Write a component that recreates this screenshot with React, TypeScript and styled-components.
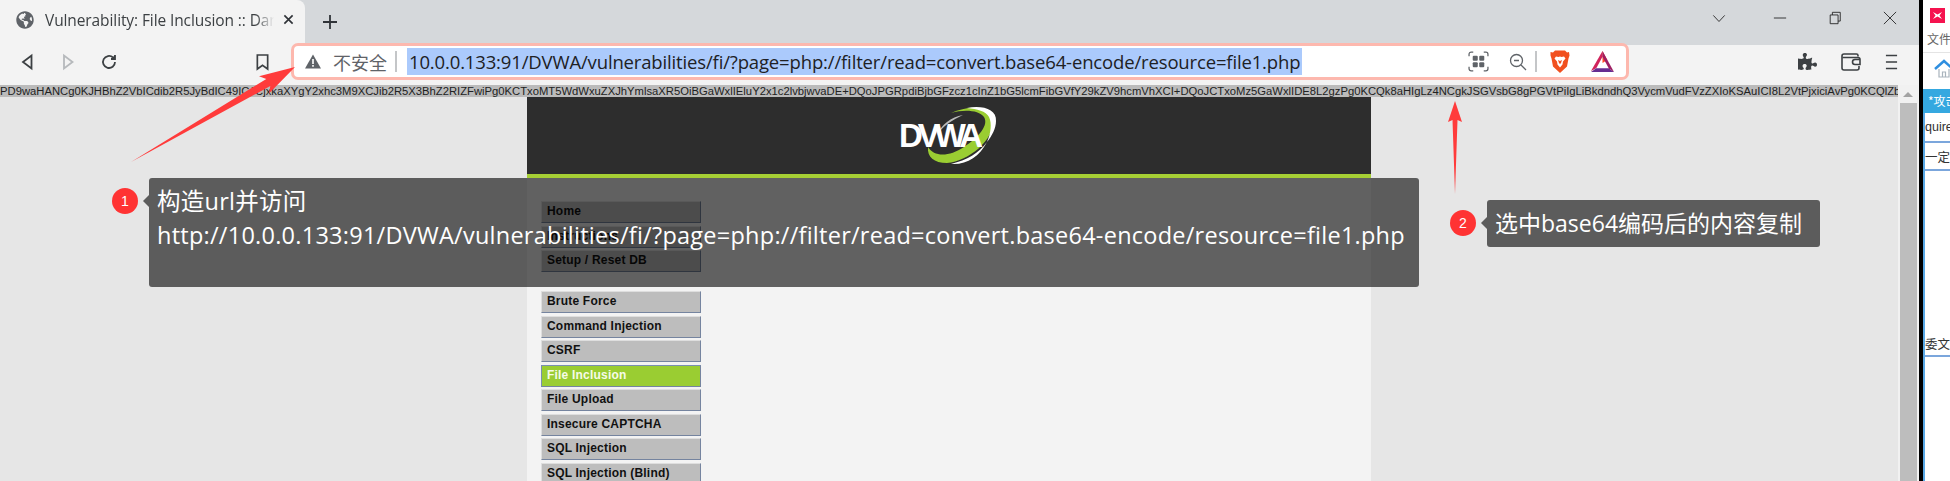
import React from 'react';

import { FaGlobeAmericas, FaPuzzlePiece } from 'react-icons/fa';
import styled, { createGlobalStyle } from 'styled-components';

const ENCODED =
  'PD9waHANCg0KJHBhZ2VbICdib2R5JyBdIC49ICJCjxkaXYgY2xhc3M9XCJib2R5X3BhZ2RIZFwiPg0KCTxoMT5WdWxuZXJhYmlsaXR5OiBGaWxlIEluY2x1c2lvbjwvaDE+DQoJPGRpdiBjbGFzcz1cInZ1bG5lcmFibGVfY29kZV9hcmVhXCI+DQoJCTxoMz5GaWxlIDE8L2gzPg0KCQk8aHIgLz4NCgkJSGVsbG8gPGVtPiIgLiBkdndhQ3VycmVudFVzZXIoKSAuICI8L2VtPjxiciAvPg0KCQlZb3UgYXJl';
const URL_TEXT = '10.0.0.133:91/DVWA/vulnerabilities/fi/?page=php://filter/read=convert.base64-encode/resource=file1.php';

const topMenu = ['Home', 'Instructions', 'Setup / Reset DB'];
const attackMenu = [
  'Brute Force',
  'Command Injection',
  'CSRF',
  'File Inclusion',
  'File Upload',
  'Insecure CAPTCHA',
  'SQL Injection',
  'SQL Injection (Blind)',
];

function App() {
  return (
    <>
      <GlobalStyle />
      <Screen>
        <Browser>
          <TabStrip>
            <Tab>
              <FaGlobeAmericas size={18} color="#5f6368" />
              <TabTitle>Vulnerability: File Inclusion :: Damn Vulnerable Web App</TabTitle>
              <TabClose viewBox="0 0 12 12">
                <path d="M1.5 1.5l9 9M10.5 1.5l-9 9" />
              </TabClose>
            </Tab>
            <NewTab viewBox="0 0 16 16">
              <path d="M8 1v14M1 8h14" />
            </NewTab>
            <WindowControls>
              <WindowIcon viewBox="0 0 16 16">
                <path d="M1.5 5l6.500 7 6.500-7" />
              </WindowIcon>
              <WindowIcon viewBox="0 0 16 16">
                <path d="M1 8h14" />
              </WindowIcon>
              <WindowIcon viewBox="0 0 16 16">
                <path d="M2.5 4.5h9v10h-9zM5 4.5V1.500h9v10h-2.500" />
              </WindowIcon>
              <WindowIcon viewBox="0 0 16 16">
                <path d="M1 1l14 14M15 1L1 15" />
              </WindowIcon>
            </WindowControls>
          </TabStrip>

          <Toolbar>
            <NavButtons>
              <NavIcon viewBox="0 0 18 18">
                <path d="M13.5 2.5v13L5 9z" />
              </NavIcon>
              <NavIcon viewBox="0 0 18 18" $muted>
                <path d="M5 2.500v13L13.500 9z" />
              </NavIcon>
              <NavIcon viewBox="0 0 18 18">
                <path d="M15 9a6 6 0 1 1-2-4.500" />
                <path d="M15 2v4h-4" fill="#3c4043" />
              </NavIcon>
              <BookmarkIcon viewBox="0 0 16 18">
                <path d="M2.5 1.500h11v15L8 12.500l-5.500 4z" />
              </BookmarkIcon>
            </NavButtons>

            <AddressBar>
              <WarningIcon viewBox="0 0 16 15">
                <path d="M8 0.500L16 14.500H0z" fill="#5f6368" />
                <path d="M7.200 5h1.600v5H7.200zM7.200 11h1.600v1.700H7.200z" fill="#fff" />
              </WarningIcon>
              <NotSecure>不安全</NotSecure>
              <AddressDivider />
              <SelectedUrl>{URL_TEXT}</SelectedUrl>
              <AddressTools>
                <QrIcon viewBox="0 0 20 20">
                  <path d="M1 5V3a2 2 0 0 1 2-2h2M15 1h2a2 2 0 0 1 2 2v2M19 15v2a2 2 0 0 1-2 2h-2M5 19H3a2 2 0 0 1-2-2v-2" fill="none" stroke="#5f6368" strokeWidth="1.200" />
                  <rect x="4.500" y="4.500" width="4.800" height="4.800" rx="1" />
                  <rect x="10.700" y="4.500" width="4.800" height="4.800" rx="1" />
                  <rect x="4.500" y="10.700" width="4.800" height="4.800" rx="1" />
                  <rect x="10.700" y="10.700" width="4.800" height="4.800" rx="1" />
                </QrIcon>
                <ZoomIcon viewBox="0 0 18 18">
                  <circle cx="7.500" cy="7.500" r="6" />
                  <path d="M5 7.500h5M12 12l5 5" />
                </ZoomIcon>
                <AddressDivider />
                <BraveIcon viewBox="0 0 20 24">
                  <path d="M5 1h10l2 2 2-.5.500 3.500-1 3-1.500 8-6.500 6-.5.500-.5-.5-6.500-6-1.500-8-1-3L.500 2.500 3 3z" fill="#f1501f" />
                  <path d="M6 7l2.500.5L10 7l1.500.5L14 7l1.500 2-2.500 3-.5 3-2.500 3-2.500-3-.5-3-2.500-3z" fill="#fff" />
                  <path d="M8 10.500l2 1 2-1-1 3-1 1-1-1z" fill="#f1501f" />
                </BraveIcon>
                <BatIcon viewBox="0 0 24 22">
                  <path d="M12 0l5 9.500-5 3z" fill="#ff4724" />
                  <path d="M12 0L0 21l5.500-3L12 6z" fill="#d1245c" />
                  <path d="M0 22h24l-5.500-4h-13z" fill="#662d91" />
                  <path d="M12 0l12 22-5.500-4L12 6z" fill="#9e1f63" />
                </BatIcon>
              </AddressTools>
            </AddressBar>

            <ExtensionTools>
              <FaPuzzlePiece size={19} color="#3c4043" />
              <WalletIcon viewBox="0 0 20 18">
                <path d="M17 3.500V2.500a1.500 1.500 0 0 0-1.500-1.500H3A2 2 0 0 0 1 3v12a2 2 0 0 0 2 2h13a2 2 0 0 0 2-2v-2" />
                <path d="M1.500 4.500H17a2 2 0 0 1 2 2v5h-5a2.500 2.500 0 0 1 0-5h5" />
              </WalletIcon>
              <MenuIcon viewBox="0 0 14 18">
                <path d="M1 2h12M1 9h12M1 16h12" />
              </MenuIcon>
            </ExtensionTools>
          </Toolbar>

          <Viewport>
            <PageArea>
              <EncodedLine>{ENCODED}</EncodedLine>
              <PageRow>
                <PageColumn>
                  <PageHeader>
                    <DvwaLogo viewBox="0 2 140 77">
                      <path d="M72 18C90 10 112 10 114 26 115 45 90 66 68 68 55 68 48 62 49 52 55 62 70 62 85 52 100 42 110 30 105 22 100 15 85 14 72 18z" fill="#9acd32" />
                      <path d="M88 13C103 10 118 14 117 26 117 33 113 41 108 47 112 38 113 28 110 22 107 16 98 14 88 13z" fill="#fff" />
                      <path d="M72 69C88 70 100 62 108 47 100 58 88 65 72 69z" fill="#fff" />
                      <path d="M84 20C72 22 62 30 58 40 64 31 73 25 84 20z" fill="#bbb" />
                      <LogoText x="20" y="52">DVWA</LogoText>
                    </DvwaLogo>
                  </PageHeader>
                  <MenuBlock>
                    <MenuGroup>
                      {topMenu.map((item) => (
                        <MenuItem key={item}>{item}</MenuItem>
                      ))}
                    </MenuGroup>
                    <MenuGroup>
                      {attackMenu.map((item) => (
                        <MenuItem key={item} $active={item === 'File Inclusion'}>
                          {item}
                        </MenuItem>
                      ))}
                    </MenuGroup>
                  </MenuBlock>
                </PageColumn>
              </PageRow>
            </PageArea>
            <Scrollbar>
              <ScrollArrow />
              <ScrollThumb />
            </Scrollbar>
          </Viewport>
        </Browser>

        <WindowGap />

        <SideWindow>
          <SideLogo viewBox="0 0 15 15">
            <rect width="15" height="15" fill="#f5134f" />
            <path d="M3 4l4.500 2.500L12 4 9.500 7.500 12 11 7.500 8.500 3 11l2.500-3.500z" fill="#fff" />
          </SideLogo>
          <SideMenuText>文件</SideMenuText>
          <SideHome viewBox="0 0 20 19">
            <path d="M1 10l9-8 9 8" fill="none" stroke="#2f8fe0" strokeWidth="2.500" />
            <path d="M5 10v8h10v-8M8.500 18v-5h3v5" fill="none" stroke="#a9b4bd" strokeWidth="1.200" />
          </SideHome>
          <SideTabBar>*攻击</SideTabBar>
          <SideEditor>
            <SideLine $height={28}>quire</SideLine>
            <SideLine $height={26}>一定要</SideLine>
            <SideLine $height={182} $alignEnd>
              委文件
            </SideLine>
          </SideEditor>
        </SideWindow>

        <Callout1Arrow viewBox="0 0 166 104">
          <polygon points="0,102 135.300,19 128,16.300 164,7 138,33.600 139.300,26" fill="#ff3b3b" />
        </Callout1Arrow>
        <Callout2Arrow viewBox="0 0 14 94">
          <polygon points="7,93 4.500,19 0,21 7,0 14,21 9.500,19" fill="#ff3b3b" />
        </Callout2Arrow>

        <NumberBadge $left={112} $top={188}>
          1
        </NumberBadge>
        <Note $left={149} $top={178} $width={1270} $height={109} $size={23.5} $spacing={0.25}>
          构造url并访问
          <br />
          http://{URL_TEXT}
        </Note>

        <NumberBadge $left={1450} $top={210}>
          2
        </NumberBadge>
        <Note $left={1487} $top={200} $width={333} $height={47} $size={23} $spacing={0}>
          选中base64编码后的内容复制
        </Note>
      </Screen>
    </>
  );
}

const GlobalStyle = createGlobalStyle`
  html, body {
    margin: 0;
    padding: 0;
    background: #fff;
    overflow: hidden;
  }
`;

const Screen = styled.div`
  position: relative;
  display: flex;
  width: 1950px;
  height: 481px;
  overflow: hidden;
  font-family: "Open Sans", "Noto Sans CJK SC", sans-serif;
`;

const Browser = styled.div`
  display: flex;
  flex-direction: column;
  width: 1919px;
  flex: none;
`;

const TabStrip = styled.div`
  display: flex;
  align-items: flex-end;
  height: 45px;
  background: #d5d8db;
  flex: none;
`;

const Tab = styled.div`
  display: flex;
  align-items: center;
  width: 305px;
  height: 45px;
  padding: 0 11px 6px 16px;
  box-sizing: border-box;
  background: #f3f3f3;
  border-radius: 0 8px 0 0;
`;

const TabTitle = styled.span`
  flex: 1;
  margin-left: 11px;
  font-family: "Open Sans", sans-serif;
  font-size: 15.5px;
  letter-spacing: -0.1px;
  color: #3c4043;
  white-space: nowrap;
  overflow: hidden;
  -webkit-mask-image: linear-gradient(90deg, #000 92%, transparent);
  mask-image: linear-gradient(90deg, #000 92%, transparent);
`;

const TabClose = styled.svg`
  width: 11px;
  height: 11px;
  margin-left: 9px;
  fill: none;
  stroke: #303338;
  stroke-width: 1.8;
`;

const NewTab = styled.svg`
  width: 16px;
  height: 16px;
  margin: 0 0 15px 17px;
  fill: none;
  stroke: #303338;
  stroke-width: 1.8;
`;

const WindowControls = styled.div`
  display: flex;
  align-items: center;
  gap: 41px;
  margin: 0 22px 20px auto;

  & > :first-child {
    margin-right: 6px;
  }
`;

const WindowIcon = styled.svg`
  width: 14px;
  height: 14px;
  fill: none;
  stroke: #222;
  stroke-width: 1;
`;

const Toolbar = styled.div`
  display: flex;
  align-items: center;
  height: 40px;
  padding-bottom: 7px;
  box-sizing: border-box;
  background: #f3f3f3;
  flex: none;
`;

const NavButtons = styled.div`
  display: flex;
  align-items: center;
  width: 291px;
  padding-left: 18px;
  box-sizing: border-box;
  flex: none;
`;

const NavIcon = styled.svg<{ $muted?: boolean }>`
  width: 18px;
  height: 18px;
  margin-right: 23px;
  fill: none;
  stroke: ${(props) => (props.$muted ? '#b6b9bc' : '#3c4043')};
  stroke-width: 1.8;
`;

const BookmarkIcon = styled.svg`
  width: 15px;
  height: 18px;
  margin-left: 114px;
  fill: none;
  stroke: #3c4043;
  stroke-width: 1.8;
`;

const AddressBar = styled.div`
  display: flex;
  align-items: center;
  width: 1338px;
  height: 37px;
  padding: 0 12px 0 11px;
  box-sizing: border-box;
  background: #fff;
  border: 3px solid #fdb8ae;
  border-radius: 7px;
  flex: none;
`;

const WarningIcon = styled.svg`
  width: 16px;
  height: 15px;
  flex: none;
`;

const NotSecure = styled.span`
  margin-left: 12px;
  font-size: 18px;
  color: #5f6368;
  font-family: "Noto Sans CJK SC", sans-serif;
`;

const AddressDivider = styled.span`
  width: 2px;
  height: 21px;
  margin-left: 8px;
  background: #c4c6c8;
  flex: none;
`;

const SelectedUrl = styled.span`
  margin-left: 10px;
  padding: 0 2px;
  line-height: 27px;
  background: #abcafc;
  font-size: 18.5px;
  letter-spacing: -0.15px;
  color: #202124;
  white-space: nowrap;
`;

const AddressTools = styled.div`
  display: flex;
  align-items: center;
  margin-left: auto;
`;

const QrIcon = styled.svg`
  width: 21px;
  height: 21px;
  fill: #5f6368;
`;

const ZoomIcon = styled.svg`
  width: 18px;
  height: 18px;
  margin-left: 20px;
  fill: none;
  stroke: #5f6368;
  stroke-width: 1.3;
`;

const BraveIcon = styled.svg`
  width: 20px;
  height: 25px;
  margin-left: 13px;
`;

const BatIcon = styled.svg`
  width: 23px;
  height: 23px;
  margin-left: 21px;
`;

const ExtensionTools = styled.div`
  display: flex;
  align-items: center;
  gap: 24px;
  margin-left: 169px;
`;

const WalletIcon = styled.svg`
  width: 20px;
  height: 18px;
  fill: none;
  stroke: #3c4043;
  stroke-width: 1.6;
`;

const MenuIcon = styled.svg`
  width: 13px;
  height: 18px;
  fill: none;
  stroke: #3c4043;
  stroke-width: 1.8;
`;

const Viewport = styled.div`
  display: flex;
  flex: 1;
  min-height: 0;
  border-right: 1px solid #f3f3f3;
`;

const PageArea = styled.div`
  display: flex;
  flex-direction: column;
  width: 1898px;
  min-width: 0;
  background: #e6e6e6;
`;

const EncodedLine = styled.div`
  height: 12px;
  line-height: 12px;
  background: #bbbbbb;
  color: #222;
  font-family: "Liberation Sans", Arial, sans-serif;
  font-size: 11.25px;
  white-space: nowrap;
  overflow: hidden;
  flex: none;
`;

const PageRow = styled.div`
  display: flex;
  justify-content: center;
  flex: 1;
  min-height: 0;
`;

const PageColumn = styled.div`
  width: 844px;
  background: #f3f3f3;
`;

const PageHeader = styled.div`
  display: flex;
  align-items: center;
  justify-content: center;
  height: 77px;
  background: #2d2d2d;
  border-bottom: 4px solid #a6cf35;
`;

const DvwaLogo = styled.svg`
  width: 140px;
  height: 77px;
`;

const LogoText = styled.text`
  font-family: "Liberation Sans", Arial, sans-serif;
  font-size: 33px;
  font-weight: 700;
  letter-spacing: -5px;
  fill: #fff;
`;

const MenuBlock = styled.div`
  display: flex;
  flex-direction: column;
  gap: 19px;
  padding: 23px 0 0 14px;
`;

const MenuGroup = styled.div`
  display: flex;
  flex-direction: column;
  gap: 2.5px;
`;

const MenuItem = styled.div<{ $active?: boolean }>`
  width: 160px;
  height: 22px;
  padding-left: 5px;
  box-sizing: border-box;
  background: ${(props) => (props.$active ? '#9acd32' : '#bdbdbd')};
  border: 1px solid ${(props) => (props.$active ? '#7a8fb0' : '#dedede')};
  border-right-color: #75849f;
  border-bottom-color: #75849f;
  color: ${(props) => (props.$active ? '#f6fbe8' : '#111')};
  font-family: "Liberation Sans", Arial, sans-serif;
  font-size: 12px;
  font-weight: 700;
  letter-spacing: 0.2px;
  line-height: 19px;
`;

const Scrollbar = styled.div`
  display: flex;
  flex-direction: column;
  align-items: center;
  flex: 1;
  padding-top: 7px;
  background: #f1f1f1;
`;

const ScrollArrow = styled.div`
  width: 0;
  height: 0;
  border-left: 5px solid transparent;
  border-right: 5px solid transparent;
  border-bottom: 5px solid #a3a3a3;
`;

const ScrollThumb = styled.div`
  flex: 1;
  width: 17px;
  margin-top: 6px;
  background: #bdbdbd;
`;

const WindowGap = styled.div`
  width: 4px;
  background: #000;
  flex: none;
`;

const SideWindow = styled.div`
  display: flex;
  flex-direction: column;
  flex: 1;
  min-width: 0;
  background: #fff;
  overflow: hidden;
`;

const SideLogo = styled.svg`
  width: 15px;
  height: 15px;
  margin: 8px 0 0 7px;
  flex: none;
`;

const SideMenuText = styled.div`
  height: 22px;
  margin-top: 7px;
  padding-left: 4px;
  border-bottom: 1px solid #e4e4e4;
  font-family: "Noto Sans CJK SC", sans-serif;
  font-size: 12px;
  line-height: 18px;
  color: #666;
  white-space: nowrap;
  flex: none;
`;

const SideHome = styled.svg`
  width: 20px;
  height: 19px;
  margin: 6px 0 0 11px;
  flex: none;
`;

const SideTabBar = styled.div`
  height: 24px;
  margin-top: 11px;
  padding-left: 5px;
  background: #35a8e0;
  color: #fff;
  font-family: "Noto Sans CJK SC", sans-serif;
  font-size: 12px;
  line-height: 24px;
  white-space: nowrap;
  flex: none;
`;

const SideEditor = styled.div`
  flex: 1;
  border-left: 2px solid #5aa9e6;
`;

const SideLine = styled.div<{ $height: number; $alignEnd?: boolean }>`
  display: flex;
  align-items: ${(props) => (props.$alignEnd ? 'flex-end' : 'center')};
  height: ${(props) => props.$height}px;
  border-bottom: 2px solid #7ba6dc;
  padding-bottom: ${(props) => (props.$alignEnd ? '2px' : '0')};
  font-family: "Liberation Sans", "Noto Sans CJK SC", sans-serif;
  font-size: 12.5px;
  color: #333;
  white-space: nowrap;
`;

const Callout1Arrow = styled.svg`
  position: absolute;
  left: 131px;
  top: 60px;
  width: 166px;
  height: 104px;
`;

const Callout2Arrow = styled.svg`
  position: absolute;
  left: 1448px;
  top: 101px;
  width: 14px;
  height: 94px;
`;

const NumberBadge = styled.div<{ $left: number; $top: number }>`
  position: absolute;
  left: ${(props) => props.$left}px;
  top: ${(props) => props.$top}px;
  width: 26px;
  height: 26px;
  border-radius: 50%;
  background: #ff3333;
  color: #fff;
  font-family: "Liberation Sans", Arial, sans-serif;
  font-size: 14px;
  line-height: 26px;
  text-align: center;
`;

const Note = styled.div<{ $left: number; $top: number; $width: number; $height: number; $size: number; $spacing: number }>`
  position: absolute;
  left: ${(props) => props.$left}px;
  top: ${(props) => props.$top}px;
  width: ${(props) => props.$width}px;
  height: ${(props) => props.$height}px;
  padding: 7px 8px 0 8px;
  box-sizing: border-box;
  background: rgba(0, 0, 0, 0.6);
  border-radius: 3px;
  color: #fff;
  font-family: "Open Sans", "Noto Sans CJK SC", sans-serif;
  font-size: ${(props) => props.$size}px;
  letter-spacing: ${(props) => props.$spacing}px;
  line-height: 33.5px;
  white-space: nowrap;

  &::before {
    content: '';
    position: absolute;
    left: -6px;
    top: 17px;
    border-top: 6px solid transparent;
    border-bottom: 6px solid transparent;
    border-right: 6px solid rgba(0, 0, 0, 0.6);
  }
`;

export default App;
